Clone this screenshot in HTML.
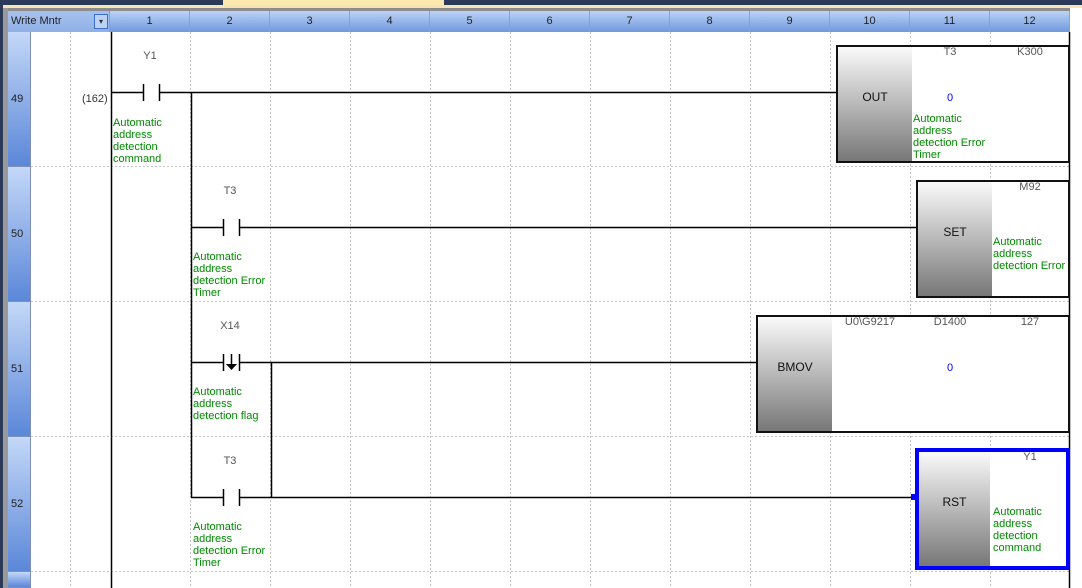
<!DOCTYPE html>
<html><head><meta charset="utf-8"><style>
*{margin:0;padding:0;box-sizing:border-box}
body{width:1082px;height:588px;overflow:hidden;background:#fff;position:relative;font-family:"Liberation Sans",sans-serif;font-size:11px;color:#333}
.a{position:absolute}
.hdr{position:absolute;top:11px;height:21px;background:linear-gradient(#bcd3f6,#6f98dc);border-right:1px solid #8aa0c8;text-align:center;line-height:21px;font-size:11px;color:#222}
.rh{position:absolute;left:8px;width:23px;background:linear-gradient(#c4d8f8,#5a87d8);border-right:1px solid #7f8fb5;border-bottom:1px solid #7f8fb5;color:#222;font-size:11px;padding-left:3px}
.cm{position:absolute;color:#008a00;font-size:11px;line-height:12px}
.lb{position:absolute;color:#555;font-size:11px;text-align:center;width:80px}
.box{position:absolute;border:2px solid #111;background:#fff}
.g{position:absolute;left:0;top:0;bottom:0;width:74px;background:linear-gradient(#fafafa,#777);color:#111;font-size:12px;text-align:center}
</style></head><body>
<div class="a" style="left:0;top:0;width:1082px;height:5px;background:#2b3a58"></div>
<div class="a" style="left:223px;top:0;width:221px;height:5px;background:#fbe7b0"></div>
<div class="a" style="left:0;top:5px;width:1082px;height:3px;background:#f6e4b2"></div>
<div class="a" style="left:0;top:8px;width:1082px;height:3px;background:#8c8c8c"></div>
<div class="a" style="left:0;top:0;width:3px;height:588px;background:#2b3a58"></div>
<div class="a" style="left:3px;top:8px;width:5px;height:580px;background:#9a9a9a"></div>
<div class="a" style="left:1070px;top:8px;width:12px;height:580px;background:#fff"></div>

<div class="hdr" style="left:8px;width:102px;text-align:left;padding-left:3px;background:linear-gradient(#a8c2ee,#8fb0e6)">Write Mntr</div>
<div class="a" style="left:94px;top:14px;width:14px;height:15px;border:1px solid #3a6fd0;background:#bcd2f4;font-size:8px;text-align:center;line-height:13px">&#9662;</div>
<div class="hdr" style="left:110px;width:80px">1</div><div class="hdr" style="left:190px;width:80px">2</div><div class="hdr" style="left:270px;width:80px">3</div><div class="hdr" style="left:350px;width:80px">4</div><div class="hdr" style="left:430px;width:80px">5</div><div class="hdr" style="left:510px;width:80px">6</div><div class="hdr" style="left:590px;width:80px">7</div><div class="hdr" style="left:670px;width:80px">8</div><div class="hdr" style="left:750px;width:80px">9</div><div class="hdr" style="left:830px;width:80px">10</div><div class="hdr" style="left:910px;width:80px">11</div><div class="hdr" style="left:990px;width:80px">12</div>

<div class="rh" style="top:32px;height:135px;line-height:135px">49</div>
<div class="rh" style="top:167px;height:135px;line-height:135px">50</div>
<div class="rh" style="top:302px;height:135px;line-height:135px">51</div>
<div class="rh" style="top:437px;height:135px;line-height:135px">52</div>
<div class="rh" style="top:572px;height:16px"></div>

<svg class="a" style="left:0;top:0" width="1082" height="588">
<g stroke="#c4c4c4" stroke-dasharray="2,2" stroke-width="1">
<line x1="70.5" y1="32" x2="70.5" y2="588"/>
<line x1="190.5" y1="32" x2="190.5" y2="588"/><line x1="270.5" y1="32" x2="270.5" y2="588"/><line x1="350.5" y1="32" x2="350.5" y2="588"/><line x1="430.5" y1="32" x2="430.5" y2="588"/><line x1="510.5" y1="32" x2="510.5" y2="588"/><line x1="590.5" y1="32" x2="590.5" y2="588"/><line x1="670.5" y1="32" x2="670.5" y2="588"/><line x1="750.5" y1="32" x2="750.5" y2="588"/><line x1="830.5" y1="32" x2="830.5" y2="588"/><line x1="910.5" y1="32" x2="910.5" y2="588"/><line x1="990.5" y1="32" x2="990.5" y2="588"/>
<line x1="31" y1="166.5" x2="1070" y2="166.5"/><line x1="31" y1="301.5" x2="1070" y2="301.5"/><line x1="31" y1="436.5" x2="1070" y2="436.5"/><line x1="31" y1="571.5" x2="1070" y2="571.5"/>
</g>
<g stroke="#000" stroke-width="1.5" fill="none">
<line x1="111.5" y1="32" x2="111.5" y2="588"/>
<line x1="1069.5" y1="32" x2="1069.5" y2="588"/>
<line x1="111" y1="92.5" x2="143" y2="92.5"/><line x1="159" y1="92.5" x2="836" y2="92.5"/>
<line x1="143.5" y1="84" x2="143.5" y2="101"/><line x1="159.5" y1="84" x2="159.5" y2="101"/>
<line x1="191.5" y1="92" x2="191.5" y2="497"/>
<line x1="191" y1="227.5" x2="223" y2="227.5"/><line x1="239" y1="227.5" x2="916" y2="227.5"/>
<line x1="223.5" y1="219" x2="223.5" y2="236"/><line x1="239.5" y1="219" x2="239.5" y2="236"/>
<line x1="191" y1="362.5" x2="223" y2="362.5"/><line x1="239" y1="362.5" x2="756" y2="362.5"/>
<line x1="223.5" y1="354" x2="223.5" y2="371"/><line x1="239.5" y1="354" x2="239.5" y2="371"/>
<line x1="231.5" y1="354" x2="231.5" y2="369"/>
<line x1="271.5" y1="362" x2="271.5" y2="497"/>
<line x1="191" y1="497.5" x2="223" y2="497.5"/><line x1="239" y1="497.5" x2="914" y2="497.5"/>
<line x1="223.5" y1="489" x2="223.5" y2="506"/><line x1="239.5" y1="489" x2="239.5" y2="506"/>
</g>
<polygon points="226,364 237,364 231.5,370" fill="#000"/>
<rect x="911" y="494" width="6" height="6" fill="#0000ff"/>
</svg>

<div class="lb" style="left:110px;top:50px">Y1</div>
<div class="a" style="left:82px;top:93px;color:#333">(162)</div>
<div class="cm" style="left:113px;top:117px">Automatic<br>address<br>detection<br>command</div>

<div class="box" style="left:836px;top:45px;width:234px;height:118px"><div class="g" style="line-height:100px">OUT</div></div>
<div class="lb" style="left:910px;top:46px">T3</div>
<div class="lb" style="left:990px;top:46px">K300</div>
<div class="lb" style="left:910px;top:92px;color:#0000ff">0</div>
<div class="cm" style="left:913px;top:113px">Automatic<br>address<br>detection Error<br>Timer</div>

<div class="lb" style="left:190px;top:185px">T3</div>
<div class="cm" style="left:193px;top:251px">Automatic<br>address<br>detection Error<br>Timer</div>
<div class="box" style="left:916px;top:180px;width:154px;height:118px"><div class="g" style="line-height:100px">SET</div></div>
<div class="lb" style="left:990px;top:181px">M92</div>
<div class="cm" style="left:993px;top:236px">Automatic<br>address<br>detection Error</div>

<div class="lb" style="left:190px;top:320px">X14</div>
<div class="cm" style="left:193px;top:386px">Automatic<br>address<br>detection flag</div>
<div class="box" style="left:756px;top:315px;width:314px;height:118px"><div class="g" style="line-height:100px">BMOV</div></div>
<div class="lb" style="left:830px;top:316px">U0\G9217</div>
<div class="lb" style="left:910px;top:316px">D1400</div>
<div class="lb" style="left:990px;top:316px">127</div>
<div class="lb" style="left:910px;top:362px;color:#0000ff">0</div>

<div class="lb" style="left:190px;top:455px">T3</div>
<div class="cm" style="left:193px;top:521px">Automatic<br>address<br>detection Error<br>Timer</div>
<div class="a" style="left:915px;top:448px;width:155px;height:122px;border:4px solid #0000ff;background:#fff"><div class="g" style="line-height:100px;width:71px">RST</div></div>
<div class="lb" style="left:990px;top:451px">Y1</div>
<div class="cm" style="left:993px;top:506px">Automatic<br>address<br>detection<br>command</div>
</body></html>
